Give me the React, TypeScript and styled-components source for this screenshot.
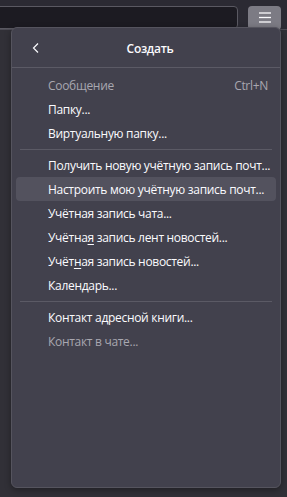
import React from "react";
import { styled, createGlobalStyle } from "styled-components";

const GlobalStyle = createGlobalStyle`
  html, body {
    margin: 0;
    padding: 0;
    background: #2b2a33;
  }
  body {
    font-family: "Open Sans", "Noto Sans", sans-serif;
    -webkit-font-smoothing: antialiased;
  }
`;

const Page = styled.div`
  position: relative;
  width: 287px;
  height: 497px;
  overflow: hidden;
  display: flex;
  flex-direction: column;
  background: #2b2a33;
`;

const Toolbar = styled.div`
  display: flex;
  align-items: flex-start;
  gap: 10px;
  height: 30px;
  padding-top: 6px;
  box-sizing: border-box;
  border-bottom: 1px solid #4d4c55;
`;

const UrlBar = styled.div`
  flex: 1;
  height: 23px;
  margin-left: -6px;
  box-sizing: border-box;
  border: 1px solid #5a5962;
  border-radius: 4px;
  background: #1c1b22;
`;

const MenuButton = styled.div`
  width: 33px;
  height: 24px;
  margin-right: 6px;
  border-radius: 4px;
  background: #7c7b84;
  display: flex;
  justify-content: center;
  padding-top: 6px;
  box-sizing: border-box;
`;

const Content = styled.div`
  flex: 1;
  background: #313037;
`;

const Panel = styled.div`
  position: absolute;
  left: 11px;
  top: 27px;
  width: 270px;
  height: 461px;
  box-sizing: border-box;
  background: #42414d;
  border: 1px solid #55545e;
  border-radius: 6px;
  color: #fbfbfe;
  font-size: 12px;
  letter-spacing: -0.3px;
  box-shadow: 0 2px 6px rgba(0, 0, 0, 0.35);
`;

const Header = styled.div`
  display: grid;
  grid-template-columns: 40px 1fr 40px;
  align-items: center;
  height: 39px;
  border-bottom: 1px solid #5b5a65;
`;

const BackButton = styled.div`
  display: flex;
  justify-content: center;
  align-items: center;
  margin-left: 8px;
`;

const Title = styled.div`
  text-align: center;
  font-weight: 600;
  font-size: 12px;
  padding-left: 8px;
  padding-top: 1px;
`;

const List = styled.div`
  display: flex;
  flex-direction: column;
  padding: 5px 4px;
`;

const Item = styled.div<{ $disabled?: boolean; $hover?: boolean }>`
  display: flex;
  justify-content: space-between;
  align-items: center;
  height: 24px;
  padding: 0 8px 0 32px;
  border-radius: 4px;
  white-space: nowrap;
  color: ${({ $disabled }) => ($disabled ? "#a8a7b0" : "#fbfbfe")};
  background: ${({ $hover }) => ($hover ? "#53525e" : "transparent")};
`;

const Shortcut = styled.span`
  color: #a8a7b0;
`;

const AccessKey = styled.span`
  text-decoration: underline;
  text-underline-offset: 2px;
`;

const Separator = styled.div`
  height: 1px;
  margin: 4px 4px 3px;
  background: #5b5a65;
`;

const Hamburger = () => (
  <svg width="12" height="11" viewBox="0 0 12 11">
    <g stroke="#fbfbfe" strokeWidth="1.3">
      <line x1="0" y1="1" x2="12" y2="1" />
      <line x1="0" y1="5.5" x2="12" y2="5.5" />
      <line x1="0" y1="10" x2="12" y2="10" />
    </g>
  </svg>
);

const Chevron = () => (
  <svg width="16" height="16" viewBox="0 0 16 16">
    <polyline
      points="10,3.5 5.5,8 10,12.5"
      fill="none"
      stroke="#fbfbfe"
      strokeWidth="1.2"
    />
  </svg>
);

const App: React.FC = () => {
  return (
    <Page>
      <GlobalStyle />
      <Toolbar>
        <UrlBar />
        <MenuButton>
          <Hamburger />
        </MenuButton>
      </Toolbar>
      <Content />
      <Panel>
        <Header>
          <BackButton>
            <Chevron />
          </BackButton>
          <Title>Создать</Title>
          <div />
        </Header>
        <List>
          <Item $disabled>
            <span>Сообщение</span>
            <Shortcut>Ctrl+N</Shortcut>
          </Item>
          <Item>Папку...</Item>
          <Item>Виртуальную папку...</Item>
          <Separator />
          <Item>Получить новую учётную запись почт...</Item>
          <Item $hover>Настроить мою учётную запись почт...</Item>
          <Item>Учётная запись чата...</Item>
          <Item>
            <span>
              Учётна<AccessKey>я</AccessKey> запись лент новостей...
            </span>
          </Item>
          <Item>
            <span>
              Учёт<AccessKey>н</AccessKey>ая запись новостей...
            </span>
          </Item>
          <Item>Календарь...</Item>
          <Separator />
          <Item>Контакт адресной книги...</Item>
          <Item $disabled>Контакт в чате...</Item>
        </List>
      </Panel>
    </Page>
  );
};

export default App;
